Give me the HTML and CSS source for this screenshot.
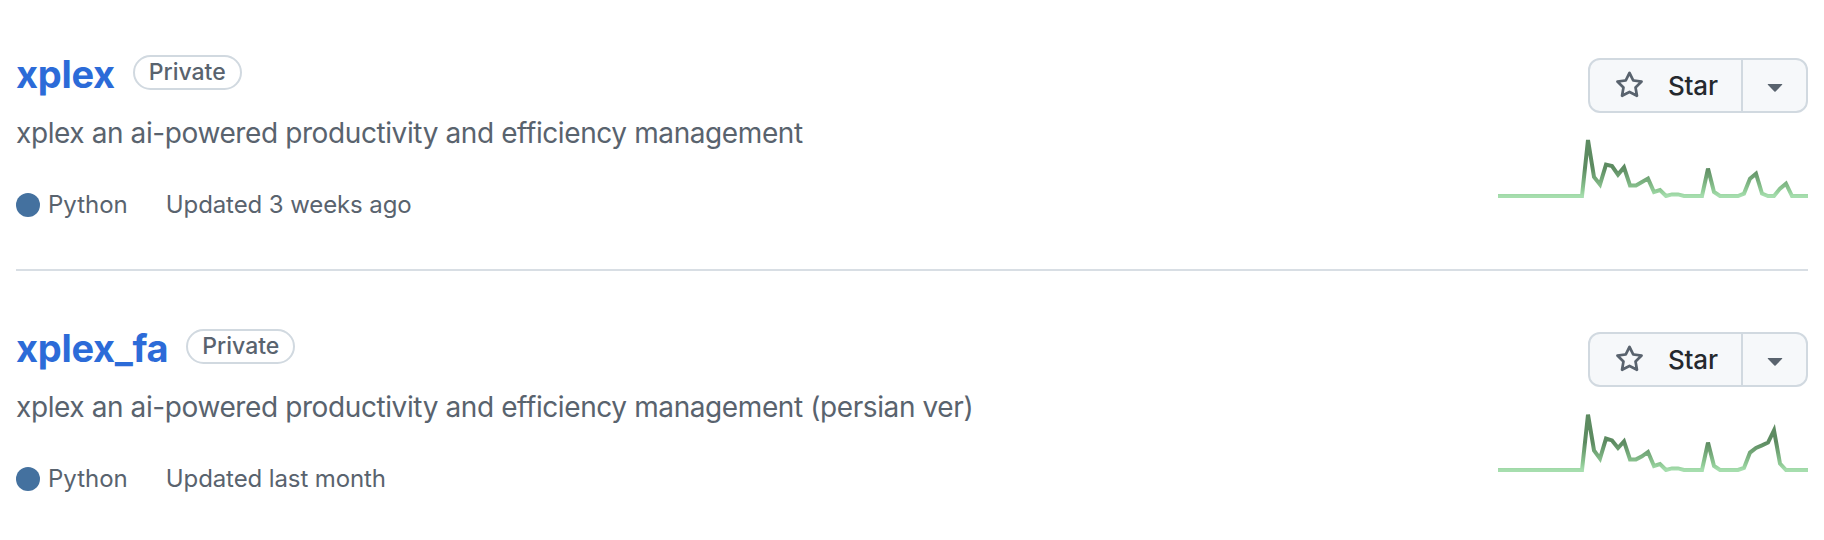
FILE: index.html
```html
<!DOCTYPE html>
<html lang="en">
<head>
<meta charset="utf-8">
<title>Repositories</title>
<link rel="stylesheet" href="styles.css">
</head>
<body>
<ul class="repo-list">
  <li class="repo">
    <div class="repo-main">
      <div class="title-row">
        <a class="repo-name" href="#">xplex</a>
        <span class="badge">Private</span>
      </div>
      <p class="desc">xplex an ai-powered productivity and efficiency management</p>
      <div class="meta">
        <span class="lang-dot"></span>
        <span class="lang">Python</span>
        <span class="updated">Updated 3 weeks ago</span>
      </div>
    </div>
    <div class="repo-side">
      <div class="star-group">
        <button class="star-btn">
          <svg class="star-icon" viewBox="0 0 16 16" width="29" height="29" aria-hidden="true"><path fill="currentColor" d="M8 .25a.75.75 0 0 1 .673.418l1.882 3.815 4.21.612a.75.75 0 0 1 .416 1.279l-3.046 2.97.719 4.192a.751.751 0 0 1-1.088.791L8 12.347l-3.766 1.98a.75.75 0 0 1-1.088-.79l.72-4.194L.818 6.374a.75.75 0 0 1 .416-1.28l4.21-.611L7.327.668A.75.75 0 0 1 8 .25Zm0 2.445L6.615 5.5a.75.75 0 0 1-.564.41l-3.097.45 2.24 2.184a.75.75 0 0 1 .216.664l-.528 3.084 2.769-1.456a.75.75 0 0 1 .698 0l2.77 1.456-.53-3.084a.75.75 0 0 1 .216-.664l2.24-2.183-3.096-.45a.75.75 0 0 1-.564-.41L8 2.694Z"/></svg>
          <span class="star-label">Star</span>
        </button>
        <button class="dd-btn" aria-label="More">
          <svg viewBox="0 0 16 16" width="32" height="32" aria-hidden="true"><path fill="currentColor" d="m4.427 7.427 3.396 3.396a.25.25 0 0 0 .354 0l3.396-3.396A.25.25 0 0 0 11.396 7H4.604a.25.25 0 0 0-.177.427Z"/></svg>
        </button>
      </div>
      <svg class="spark" width="310" height="60" viewBox="0 0 155 30" aria-hidden="true">
        <defs>
          <linearGradient id="g1" x1="0" x2="0" y1="1" y2="0">
            <stop offset="0%" stop-color="#a6deae"/>
            <stop offset="10%" stop-color="#90cb96"/>
            <stop offset="25%" stop-color="#7bb180"/>
            <stop offset="50%" stop-color="#5d8b61"/>
          </linearGradient>
        </defs>
        <polyline fill="none" stroke="url(#g1)" stroke-width="2" points="0,29 3,29 6,29 9,29 12,29 15,29 18,29 21,29 24,29 27,29 30,29 33,29 36,29 39,29 42,29 45,1 48,19.5 51,23.3 54,13.3 57,14 60,18.3 63,14.7 66,23.7 69,23.7 72,22 75,20.3 78,27 81,26 84,29 87,28.2 90,28.2 93,29 96,29 99,29 102,29 105,15.3 108,27 111,29 114,29 117,29 120,29 123,27.8 126,20.3 129,17.8 132,27.8 135,29 138,29 141,25.3 144,22.8 147,29 150,29 155,29"/>
      </svg>
    </div>
  </li>
  <li class="repo">
    <div class="repo-main">
      <div class="title-row">
        <a class="repo-name" href="#">xplex_fa</a>
        <span class="badge">Private</span>
      </div>
      <p class="desc">xplex an ai-powered productivity and efficiency management (persian ver)</p>
      <div class="meta">
        <span class="lang-dot"></span>
        <span class="lang">Python</span>
        <span class="updated">Updated last month</span>
      </div>
    </div>
    <div class="repo-side">
      <div class="star-group">
        <button class="star-btn">
          <svg class="star-icon" viewBox="0 0 16 16" width="29" height="29" aria-hidden="true"><path fill="currentColor" d="M8 .25a.75.75 0 0 1 .673.418l1.882 3.815 4.21.612a.75.75 0 0 1 .416 1.279l-3.046 2.97.719 4.192a.751.751 0 0 1-1.088.791L8 12.347l-3.766 1.98a.75.75 0 0 1-1.088-.79l.72-4.194L.818 6.374a.75.75 0 0 1 .416-1.28l4.21-.611L7.327.668A.75.75 0 0 1 8 .25Zm0 2.445L6.615 5.5a.75.75 0 0 1-.564.41l-3.097.45 2.24 2.184a.75.75 0 0 1 .216.664l-.528 3.084 2.769-1.456a.75.75 0 0 1 .698 0l2.77 1.456-.53-3.084a.75.75 0 0 1 .216-.664l2.24-2.183-3.096-.45a.75.75 0 0 1-.564-.41L8 2.694Z"/></svg>
          <span class="star-label">Star</span>
        </button>
        <button class="dd-btn" aria-label="More">
          <svg viewBox="0 0 16 16" width="32" height="32" aria-hidden="true"><path fill="currentColor" d="m4.427 7.427 3.396 3.396a.25.25 0 0 0 .354 0l3.396-3.396A.25.25 0 0 0 11.396 7H4.604a.25.25 0 0 0-.177.427Z"/></svg>
        </button>
      </div>
      <svg class="spark" width="310" height="60" viewBox="0 0 155 30" aria-hidden="true">
        <defs>
          <linearGradient id="g2" x1="0" x2="0" y1="1" y2="0">
            <stop offset="0%" stop-color="#a6deae"/>
            <stop offset="10%" stop-color="#90cb96"/>
            <stop offset="25%" stop-color="#7bb180"/>
            <stop offset="50%" stop-color="#5d8b61"/>
          </linearGradient>
        </defs>
        <polyline fill="none" stroke="url(#g2)" stroke-width="2" points="0,29 3,29 6,29 9,29 12,29 15,29 18,29 21,29 24,29 27,29 30,29 33,29 36,29 39,29 42,29 45,1.3 48,19.2 51,23.3 54,13.3 57,14.2 60,18 63,14.7 66,23.7 69,23.7 72,22.2 75,20 78,27 81,26 84,29 87,28.2 90,28.2 93,29 96,29 99,29 102,29 105,15.3 108,27 111,29 114,29 117,29 120,29 123,28 126,20.3 129,18 132,16.7 135,15.3 138,9.2 141,25.8 144,29 147,29 150,29 155,29"/>
      </svg>
    </div>
  </li>
</ul>
</body>
</html>
```
FILE: styles.css
```css
* { box-sizing: border-box; }

html, body {
  margin: 0;
  padding: 0;
  background: #ffffff;
}

body {
  font-family: Inter, "Noto Sans", "Liberation Sans", sans-serif;
  color: #25292e;
  padding: 0 16px;
}

.repo-list {
  list-style: none;
  margin: 0;
  padding: 0;
}

.repo {
  display: flex;
  justify-content: space-between;
  padding: 48px 0 46px;
  border-bottom: 2px solid #d8dee4;
}

.repo:first-child {
  padding-top: 45px;
}

.repo-main {
  display: flex;
  flex-direction: column;
}

.title-row {
  display: flex;
  align-items: flex-start;
  height: 50px;
  margin-top: 4px;
}

.repo-name {
  font-size: 38px;
  line-height: 50px;
  font-weight: 700;
  letter-spacing: -0.3px;
  color: #2c6bd8;
  text-decoration: none;
}

.badge {
  margin-left: 18px;
  margin-top: 6px;
  height: 35px;
  padding: 0 14px;
  border: 2px solid #d1d9e0;
  border-radius: 999px;
  font-size: 23px;
  line-height: 31px;
  font-weight: 500;
  color: #59636e;
}

.desc {
  margin: 13px 0 0;
  font-size: 28px;
  line-height: 42px;
  letter-spacing: -0.4px;
  color: #59636e;
}

.meta {
  margin-top: 33px;
  display: flex;
  align-items: center;
  font-size: 24px;
  line-height: 36px;
  color: #59636e;
}

.lang-dot {
  width: 24px;
  height: 24px;
  border-radius: 50%;
  background: #44719f;
  margin-right: 8px;
}

.lang {
  margin-right: 38px;
}

.updated {
  letter-spacing: -0.1px;
}

.repo-side {
  display: flex;
  flex-direction: column;
  align-items: flex-end;
  padding-top: 13px;
}

.star-group {
  display: flex;
  height: 55px;
  border: 2px solid #d1d9e0;
  border-radius: 12px;
  background: #f6f8fa;
  overflow: hidden;
}

.star-btn,
.dd-btn {
  border: 0;
  margin: 0;
  background: transparent;
  font-family: inherit;
  display: flex;
  align-items: center;
  padding: 0;
  cursor: pointer;
}

.star-btn {
  width: 151px;
  padding-left: 25px;
  gap: 24px;
  color: #59636e;
}

.star-label {
  font-size: 26px;
  font-weight: 500;
  letter-spacing: -0.2px;
  color: #25292e;
}

.dd-btn {
  width: 65px;
  justify-content: center;
  border-left: 2px solid #d1d9e0;
  color: #59636e;
}

.dd-btn svg {
  margin-top: 1px;
}

.spark {
  display: block;
  margin-top: 25px;
}
```
